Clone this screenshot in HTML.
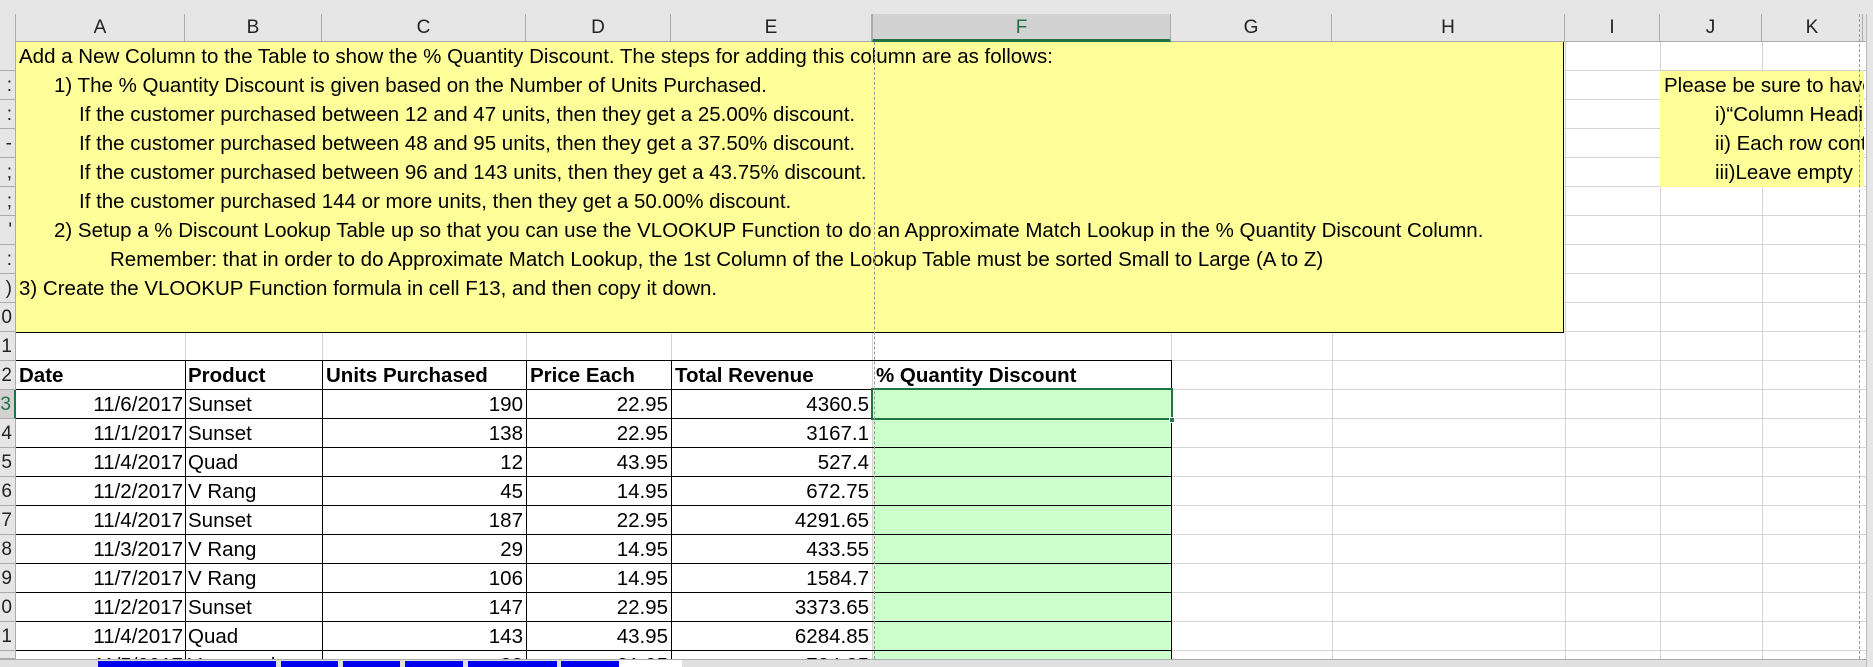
<!DOCTYPE html>
<html style="width:1873px;height:667px;overflow:hidden"><head><meta charset="utf-8"><style>
*{margin:0;padding:0;box-sizing:border-box}
body{width:1873px;height:667px;overflow:hidden;background:#fff;font-family:"Liberation Sans",sans-serif;font-size:20.5px;color:#000;position:relative}
.a{position:absolute}
.vl{position:absolute;width:1px;background:#d4d4d4}
.hl{position:absolute;height:1px;background:#d4d4d4}
.t{position:absolute;white-space:nowrap;line-height:30px;height:29px}
.r{text-align:right}
.ch{position:absolute;top:14px;height:28px;line-height:28px;text-align:center;font-size:19px;color:#222;border-right:1px solid #ababab}
.rh{position:absolute;left:0;width:16px;height:29px;overflow:hidden;text-align:right;padding-right:3px;line-height:29px;font-size:19px;color:#222;background:#e6e6e6;border-bottom:1px solid #ababab;border-right:1px solid #ababab}
.b{font-weight:bold}
</style></head><body>
<div class="a" style="left:0;top:0;width:1873px;height:42px;background:#e6e6e6"></div>
<div class="a" style="left:0;top:41px;width:1866px;height:1px;background:#ababab"></div>
<div class="ch" style="left:16px;width:169px">A</div>
<div class="ch" style="left:185px;width:137px">B</div>
<div class="ch" style="left:322px;width:204px">C</div>
<div class="ch" style="left:526px;width:145px">D</div>
<div class="ch" style="left:671px;width:201px">E</div>
<div class="ch" style="left:872px;width:299px;background:#d2d2d2;color:#217346;border-bottom:3px solid #217346;border-left:1px solid #ababab">F</div>
<div class="ch" style="left:1171px;width:161px">G</div>
<div class="ch" style="left:1332px;width:233px">H</div>
<div class="ch" style="left:1565px;width:95px">I</div>
<div class="ch" style="left:1660px;width:102px">J</div>
<div class="ch" style="left:1762px;width:101px">K</div>
<div class="a" style="left:0;top:14px;width:16px;height:28px;background:#e6e6e6;border-right:1px solid #ababab"></div>

<div class="rh" style="top:42px"></div>
<div class="rh" style="top:71px">:</div>
<div class="rh" style="top:100px">:</div>
<div class="rh" style="top:129px">-</div>
<div class="rh" style="top:158px">;</div>
<div class="rh" style="top:187px">;</div>
<div class="rh" style="top:216px">'</div>
<div class="rh" style="top:245px">:</div>
<div class="rh" style="top:274px">)</div>
<div class="rh" style="top:303px">0</div>
<div class="rh" style="top:332px">1</div>
<div class="rh" style="top:361px">2</div>
<div class="rh" style="top:390px;background:#d2d2d2;color:#217346;border-right:2px solid #217346">3</div>
<div class="rh" style="top:419px">4</div>
<div class="rh" style="top:448px">5</div>
<div class="rh" style="top:477px">6</div>
<div class="rh" style="top:506px">7</div>
<div class="rh" style="top:535px">8</div>
<div class="rh" style="top:564px">9</div>
<div class="rh" style="top:593px">0</div>
<div class="rh" style="top:622px">1</div>
<div class="rh" style="top:651px;height:8px"></div>

<div class="vl" style="left:185px;top:42px;height:617px"></div>
<div class="vl" style="left:322px;top:42px;height:617px"></div>
<div class="vl" style="left:526px;top:42px;height:617px"></div>
<div class="vl" style="left:671px;top:42px;height:617px"></div>
<div class="vl" style="left:872px;top:42px;height:617px"></div>
<div class="vl" style="left:1171px;top:42px;height:617px"></div>
<div class="vl" style="left:1332px;top:42px;height:617px"></div>
<div class="vl" style="left:1565px;top:42px;height:617px"></div>
<div class="vl" style="left:1660px;top:42px;height:617px"></div>
<div class="vl" style="left:1762px;top:42px;height:617px"></div>
<div class="hl" style="left:16px;top:70px;width:1850px"></div>
<div class="hl" style="left:16px;top:99px;width:1850px"></div>
<div class="hl" style="left:16px;top:128px;width:1850px"></div>
<div class="hl" style="left:16px;top:157px;width:1850px"></div>
<div class="hl" style="left:16px;top:186px;width:1850px"></div>
<div class="hl" style="left:16px;top:215px;width:1850px"></div>
<div class="hl" style="left:16px;top:244px;width:1850px"></div>
<div class="hl" style="left:16px;top:273px;width:1850px"></div>
<div class="hl" style="left:16px;top:302px;width:1850px"></div>
<div class="hl" style="left:16px;top:331px;width:1850px"></div>
<div class="hl" style="left:16px;top:360px;width:1850px"></div>
<div class="hl" style="left:16px;top:389px;width:1850px"></div>
<div class="hl" style="left:16px;top:418px;width:1850px"></div>
<div class="hl" style="left:16px;top:447px;width:1850px"></div>
<div class="hl" style="left:16px;top:476px;width:1850px"></div>
<div class="hl" style="left:16px;top:505px;width:1850px"></div>
<div class="hl" style="left:16px;top:534px;width:1850px"></div>
<div class="hl" style="left:16px;top:563px;width:1850px"></div>
<div class="hl" style="left:16px;top:592px;width:1850px"></div>
<div class="hl" style="left:16px;top:621px;width:1850px"></div>
<div class="hl" style="left:16px;top:650px;width:1850px"></div>

<div class="a" style="left:873px;top:390px;width:298px;height:269px;background:#ccffcc"></div>

<div class="a" style="left:16px;top:360px;width:1156px;height:1px;background:#000"></div>
<div class="a" style="left:16px;top:389px;width:1156px;height:1px;background:#000"></div>
<div class="a" style="left:16px;top:418px;width:1156px;height:1px;background:#000"></div>
<div class="a" style="left:16px;top:447px;width:1156px;height:1px;background:#000"></div>
<div class="a" style="left:16px;top:476px;width:1156px;height:1px;background:#000"></div>
<div class="a" style="left:16px;top:505px;width:1156px;height:1px;background:#000"></div>
<div class="a" style="left:16px;top:534px;width:1156px;height:1px;background:#000"></div>
<div class="a" style="left:16px;top:563px;width:1156px;height:1px;background:#000"></div>
<div class="a" style="left:16px;top:592px;width:1156px;height:1px;background:#000"></div>
<div class="a" style="left:16px;top:621px;width:1156px;height:1px;background:#000"></div>
<div class="a" style="left:16px;top:650px;width:1156px;height:1px;background:#000"></div>
<div class="a" style="left:185px;top:360px;width:1px;height:299px;background:#000"></div>
<div class="a" style="left:322px;top:360px;width:1px;height:299px;background:#000"></div>
<div class="a" style="left:526px;top:360px;width:1px;height:299px;background:#000"></div>
<div class="a" style="left:671px;top:360px;width:1px;height:299px;background:#000"></div>
<div class="a" style="left:1171px;top:360px;width:1px;height:299px;background:#000"></div>

<div class="a" style="left:16px;top:42px;width:1548px;height:291px;background:#ffff99;border:1px solid #000;border-top:none;border-left:none"></div>
<div class="t" style="left:19px;top:42px">Add a New Column to the Table to show the % Quantity Discount. The steps for adding this column are as follows:</div>
<div class="t" style="left:54px;top:71px">1) The % Quantity Discount is given based on the Number of Units Purchased.</div>
<div class="t" style="left:79px;top:100px">If the customer purchased between 12 and 47 units, then they get a 25.00% discount.</div>
<div class="t" style="left:79px;top:129px">If the customer purchased between 48 and 95 units, then they get a 37.50% discount.</div>
<div class="t" style="left:79px;top:158px">If the customer purchased between 96 and 143 units, then they get a 43.75% discount.</div>
<div class="t" style="left:79px;top:187px">If the customer purchased 144 or more units, then they get a 50.00% discount.</div>
<div class="t" style="left:54px;top:216px">2) Setup a % Discount Lookup Table up so that you can use the VLOOKUP Function to do an Approximate Match Lookup in the % Quantity Discount Column.</div>
<div class="t" style="left:110px;top:245px">Remember: that in order to do Approximate Match Lookup, the 1st Column of the Lookup Table must be sorted Small to Large (A to Z)</div>
<div class="t" style="left:19px;top:274px">3) Create the VLOOKUP Function formula in cell F13, and then copy it down.</div>

<div class="a" style="left:1660px;top:71px;width:204px;height:116px;background:#ffff99;overflow:hidden">
<div class="t" style="left:4px;top:0">Please be sure to have</div>
<div class="t" style="left:55px;top:29px">i)“Column Headings”</div>
<div class="t" style="left:55px;top:58px">ii) Each row contains</div>
<div class="t" style="left:55px;top:87px">iii)Leave empty</div>
</div>

<div class="t b" style="left:19px;top:361px">Date</div>
<div class="t b" style="left:188px;top:361px">Product</div>
<div class="t b" style="left:326px;top:361px">Units Purchased</div>
<div class="t b" style="left:530px;top:361px">Price Each</div>
<div class="t b" style="left:675px;top:361px">Total Revenue</div>
<div class="t b" style="left:876px;top:361px">% Quantity Discount</div>

<div class="t r" style="left:16px;width:167px;top:390px">11/6/2017</div>
<div class="t" style="left:188px;top:390px">Sunset</div>
<div class="t r" style="left:322px;width:201px;top:390px">190</div>
<div class="t r" style="left:526px;width:142px;top:390px">22.95</div>
<div class="t r" style="left:671px;width:198px;top:390px">4360.5</div>

<div class="t r" style="left:16px;width:167px;top:419px">11/1/2017</div>
<div class="t" style="left:188px;top:419px">Sunset</div>
<div class="t r" style="left:322px;width:201px;top:419px">138</div>
<div class="t r" style="left:526px;width:142px;top:419px">22.95</div>
<div class="t r" style="left:671px;width:198px;top:419px">3167.1</div>

<div class="t r" style="left:16px;width:167px;top:448px">11/4/2017</div>
<div class="t" style="left:188px;top:448px">Quad</div>
<div class="t r" style="left:322px;width:201px;top:448px">12</div>
<div class="t r" style="left:526px;width:142px;top:448px">43.95</div>
<div class="t r" style="left:671px;width:198px;top:448px">527.4</div>

<div class="t r" style="left:16px;width:167px;top:477px">11/2/2017</div>
<div class="t" style="left:188px;top:477px">V Rang</div>
<div class="t r" style="left:322px;width:201px;top:477px">45</div>
<div class="t r" style="left:526px;width:142px;top:477px">14.95</div>
<div class="t r" style="left:671px;width:198px;top:477px">672.75</div>

<div class="t r" style="left:16px;width:167px;top:506px">11/4/2017</div>
<div class="t" style="left:188px;top:506px">Sunset</div>
<div class="t r" style="left:322px;width:201px;top:506px">187</div>
<div class="t r" style="left:526px;width:142px;top:506px">22.95</div>
<div class="t r" style="left:671px;width:198px;top:506px">4291.65</div>

<div class="t r" style="left:16px;width:167px;top:535px">11/3/2017</div>
<div class="t" style="left:188px;top:535px">V Rang</div>
<div class="t r" style="left:322px;width:201px;top:535px">29</div>
<div class="t r" style="left:526px;width:142px;top:535px">14.95</div>
<div class="t r" style="left:671px;width:198px;top:535px">433.55</div>

<div class="t r" style="left:16px;width:167px;top:564px">11/7/2017</div>
<div class="t" style="left:188px;top:564px">V Rang</div>
<div class="t r" style="left:322px;width:201px;top:564px">106</div>
<div class="t r" style="left:526px;width:142px;top:564px">14.95</div>
<div class="t r" style="left:671px;width:198px;top:564px">1584.7</div>

<div class="t r" style="left:16px;width:167px;top:593px">11/2/2017</div>
<div class="t" style="left:188px;top:593px">Sunset</div>
<div class="t r" style="left:322px;width:201px;top:593px">147</div>
<div class="t r" style="left:526px;width:142px;top:593px">22.95</div>
<div class="t r" style="left:671px;width:198px;top:593px">3373.65</div>

<div class="t r" style="left:16px;width:167px;top:622px">11/4/2017</div>
<div class="t" style="left:188px;top:622px">Quad</div>
<div class="t r" style="left:322px;width:201px;top:622px">143</div>
<div class="t r" style="left:526px;width:142px;top:622px">43.95</div>
<div class="t r" style="left:671px;width:198px;top:622px">6284.85</div>

<div class="a" style="left:16px;top:651px;width:1000px;height:8px;overflow:hidden">
<div class="t r" style="left:0;width:167px;top:0">11/5/2017</div>
<div class="t" style="left:172px;top:0">Vanguard</div>
<div class="t r" style="left:306px;width:201px;top:0">33</div>
<div class="t r" style="left:510px;width:142px;top:0">21.95</div>
<div class="t r" style="left:655px;width:198px;top:0">724.35</div>
</div>

<div class="a" style="left:871px;top:388px;width:302px;height:32px;border:2px solid #217346"></div>
<div class="a" style="left:1169px;top:417px;width:6px;height:6px;background:#217346;border:1px solid #fff"></div>

<div class="a" style="left:874px;top:42px;height:617px;border-left:1px dashed #999"></div>
<div class="a" style="left:1859px;top:14px;height:645px;border-left:1px dashed #999"></div>
<div class="a" style="left:1866px;top:14px;width:7px;height:653px;background:#e6e6e6;border-left:1px solid #bbb"></div>

<div class="a" style="left:0;top:659px;width:1866px;height:8px;background:#e0e0e0;border-top:1px solid #aaa;z-index:5"></div>
<div class="a" style="left:98px;top:661px;width:178px;height:6px;background:#0000ee;z-index:6"></div>
<div class="a" style="left:281px;top:661px;width:57px;height:6px;background:#0000ee;z-index:6"></div>
<div class="a" style="left:343px;top:661px;width:57px;height:6px;background:#0000ee;z-index:6"></div>
<div class="a" style="left:405px;top:661px;width:58px;height:6px;background:#0000ee;z-index:6"></div>
<div class="a" style="left:468px;top:661px;width:89px;height:6px;background:#0000ee;z-index:6"></div>
<div class="a" style="left:561px;top:661px;width:58px;height:6px;background:#0000ee;z-index:6"></div>
<div class="a" style="left:619px;top:660px;width:63px;height:7px;background:#fff;z-index:6"></div>
</body></html>
